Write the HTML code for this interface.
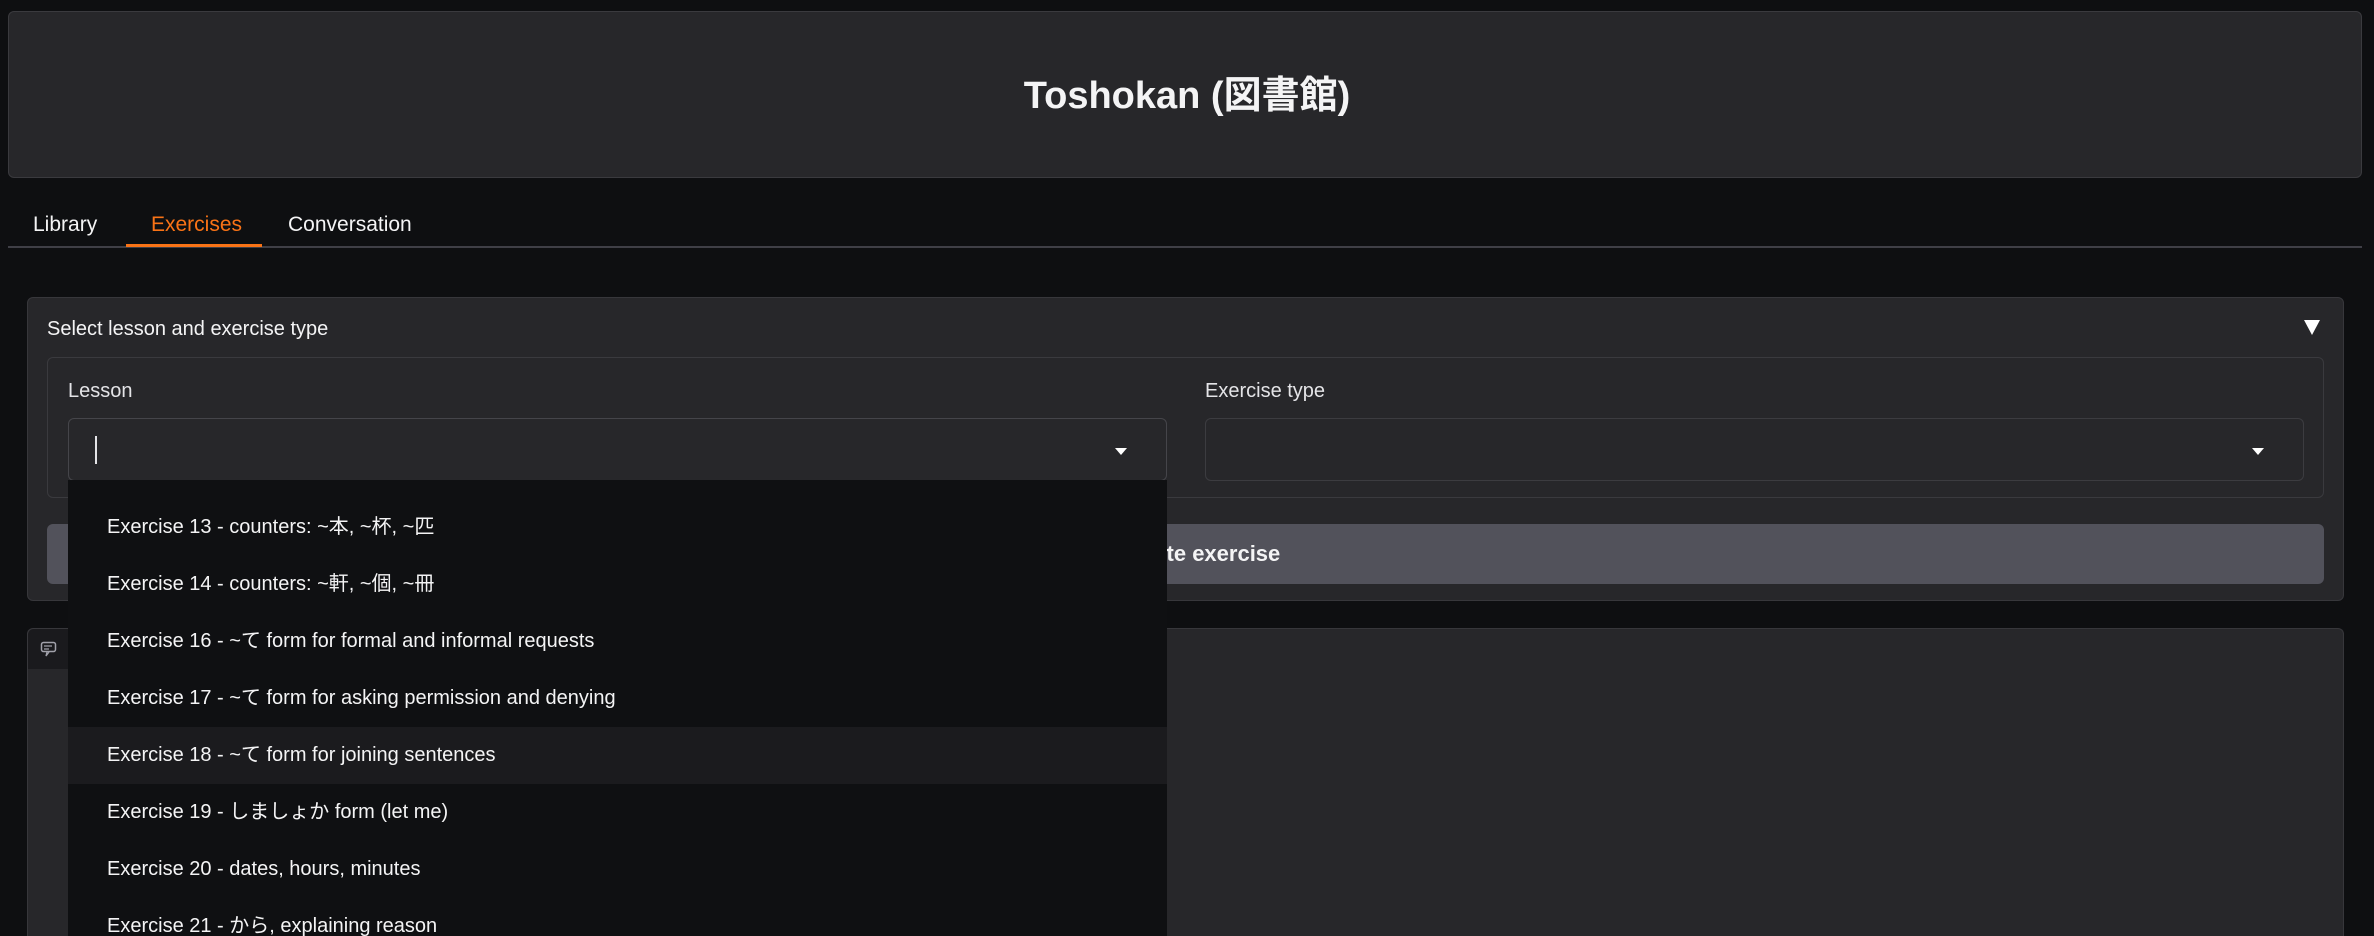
<!DOCTYPE html>
<html style="width:2374px;height:936px;overflow:hidden"><head><meta charset="utf-8"><style>
*{box-sizing:border-box;margin:0;padding:0}
body{width:2374px;height:936px;background:#0e0f11;overflow:hidden;position:relative;font-family:"Liberation Sans","Noto Sans CJK JP",sans-serif;color:#f4f4f5}
.abs{position:absolute}
.hdr{left:8px;top:11px;width:2354px;height:167px;background:#27272a;border:1px solid #3a3a3e;border-radius:6px}
.title{left:0;width:2374px;text-align:center;font-size:38px;font-weight:bold}
.tab{top:213px;font-size:21px}
.tabline{left:8px;top:246px;width:2354px;height:2px;background:#3f3f46}
.acc{left:27px;top:297px;width:2317px;height:304px;background:#27272a;border:1px solid #37373b;border-radius:6px}
.inner{left:47px;top:357px;width:2277px;height:141px;border:1px solid #3a3a3e;border-radius:6px}
.lbl{font-size:20px;color:#e4e4e7}
.inp{height:63px;border:1px solid #3c3c40;border-radius:6px;background:#27272a}
.btn{left:47px;top:524px;width:2277px;height:60px;background:#52525b;border-radius:6px;text-align:center;line-height:60px;font-size:22px;font-weight:bold}
.chat{left:27px;top:628px;width:2317px;height:308px;background:#27272a;border:1px solid #37373b;border-bottom:none;border-radius:6px 6px 0 0}
.dd{left:68px;top:480px;width:1099px;height:456px;background:#0f1012;overflow:hidden}
.it{position:absolute;left:0;width:1099px;height:57px;line-height:57px;padding-left:39px;font-size:20px;color:#f4f4f5;white-space:nowrap}
</style></head><body>
<div class="abs hdr"></div>
<div class="abs title" style="top:64px">Toshokan (図書館)</div>
<div class="abs tab" style="left:33px">Library</div>
<div class="abs tab" style="left:151px;color:#f97316">Exercises</div>
<div class="abs tab" style="left:288px">Conversation</div>
<div class="abs tabline"></div>
<div class="abs" style="left:126px;top:244px;width:136px;height:3px;background:#f97316"></div>

<div class="abs acc"></div>
<div class="abs lbl" style="left:47px;top:318px;color:#f4f4f5">Select lesson and exercise type</div>
<div class="abs" style="left:2304px;top:320px;width:0;height:0;border-left:8px solid transparent;border-right:8px solid transparent;border-top:15px solid #fff"></div>
<div class="abs inner"></div>
<div class="abs lbl" style="left:68px;top:380px">Lesson</div>
<div class="abs lbl" style="left:1205px;top:380px">Exercise type</div>
<div class="abs inp" style="left:68px;top:418px;width:1099px;border-color:#45454a"></div>
<div class="abs" style="left:95px;top:436px;width:2px;height:28px;background:#e4e4e7"></div>
<div class="abs" style="left:1115px;top:448px;border-left:6px solid transparent;border-right:6px solid transparent;border-top:7px solid #fff"></div>
<div class="abs inp" style="left:1205px;top:418px;width:1099px"></div>
<div class="abs" style="left:2252px;top:448px;border-left:6px solid transparent;border-right:6px solid transparent;border-top:7px solid #fff"></div>
<div class="abs btn">Generate exercise</div>

<div class="abs chat"></div>
<div class="abs" style="left:28px;top:629px;width:41px;height:40px;background:#1a1a1d;border-radius:6px 0 0 0"></div>
<svg class="abs" style="left:40px;top:641px" width="18" height="17" viewBox="0 0 18 17"><rect x="1.5" y="1.5" width="14" height="9" rx="2" fill="none" stroke="#a1a1aa" stroke-width="1.5"/><path d="M4 5h8M4 8h5M7 11l-1 4 3-4" fill="none" stroke="#a1a1aa" stroke-width="1.3"/></svg>

<div class="abs dd">
<div class="it" style="top:-38px">Exercise 12 - counters: ~人, ~枚, ~台</div>
<div class="it" style="top:19px">Exercise 13 - counters: ~本, ~杯, ~匹</div>
<div class="it" style="top:76px">Exercise 14 - counters: ~軒, ~個, ~冊</div>
<div class="it" style="top:133px">Exercise 16 - ~て form for formal and informal requests</div>
<div class="it" style="top:190px">Exercise 17 - ~て form for asking permission and denying</div>
<div class="it" style="top:247px;background:#1b1b1e">Exercise 18 - ~て form for joining sentences</div>
<div class="it" style="top:304px">Exercise 19 - しましょか form (let me)</div>
<div class="it" style="top:361px">Exercise 20 - dates, hours, minutes</div>
<div class="it" style="top:418px">Exercise 21 - から, explaining reason</div>
</div>
</body></html>
